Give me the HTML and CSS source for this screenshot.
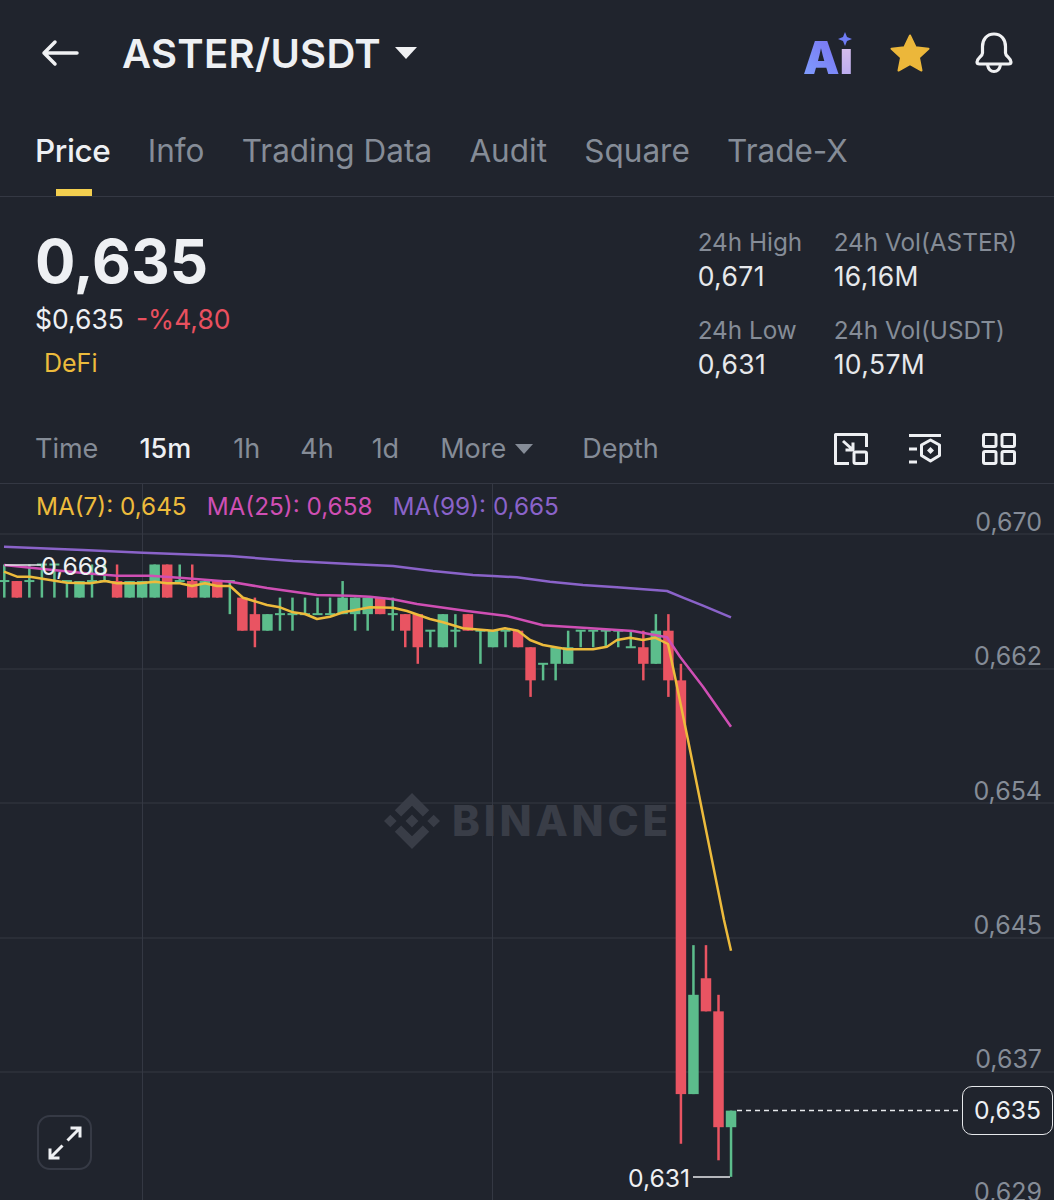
FILE: index.html
```html
<!DOCTYPE html>
<html lang="en">
<head>
  <meta charset="UTF-8">
  <meta name="viewport" content="width=device-width, initial-scale=1.0">
  <title>ASTER/USDT</title>
  <link rel="stylesheet" href="styles.css">
</head>
<body>
  <header class="topbar">
    <svg class="back" viewBox="0 0 38 28" width="38" height="28"><path d="M36 14H3M14 3 3 14l11 11"/></svg>
    <div class="pair">ASTER/USDT</div>
    <span class="pair-caret"></span>
    <div class="top-icons">
      <div class="ai-icon">
        <span class="ai-a">A</span><span class="ai-i">i</span>
        <svg class="ai-spark" viewBox="0 0 14 14" width="14" height="14"><path d="M7 0 9 5 14 7 9 9 7 14 5 9 0 7 5 5z"/></svg>
      </div>
      <svg class="star" viewBox="0 0 40 38" width="40" height="38"><path d="M20 1.500 25.600 13.200 38.500 14.800 29 23.600 31.500 36.500 20 30.200 8.500 36.500 11 23.600 1.500 14.800 14.400 13.200z"/></svg>
      <svg class="bell" viewBox="0 0 40 42" width="40" height="42"><path d="M20 2C12.500 2 8.500 8 8.500 14.500V21C8.500 24.500 3 26 3 30C3 31.500 4 32 5.500 32H34.500C36 32 37 31.500 37 30C37 26 31.500 24.500 31.500 21V14.500C31.500 8 27.500 2 20 2Z"/><path d="M13.500 33C14.500 37.500 17 39.500 20 39.500S25.500 37.500 26.500 33"/></svg>
    </div>
  </header>

  <nav class="tabs">
    <a class="tab tab-active">Price</a>
    <a class="tab">Info</a>
    <a class="tab">Trading Data</a>
    <a class="tab">Audit</a>
    <a class="tab">Square</a>
    <a class="tab">Trade-X</a>
  </nav>

  <section class="summary">
    <div class="summary-left">
      <div class="last-price">0,635</div>
      <div class="sub-price"><span>$0,635</span><span class="down">-%4,80</span></div>
      <div class="tag">DeFi</div>
    </div>
    <div class="stats">
      <div class="stat"><div class="stat-label">24h High</div><div class="stat-value">0,671</div></div>
      <div class="stat"><div class="stat-label">24h Vol(ASTER)</div><div class="stat-value">16,16M</div></div>
      <div class="stat"><div class="stat-label">24h Low</div><div class="stat-value">0,631</div></div>
      <div class="stat"><div class="stat-label">24h Vol(USDT)</div><div class="stat-value">10,57M</div></div>
    </div>
  </section>

  <div class="intervals">
    <span class="iv iv-time">Time</span>
    <span class="iv iv-15m">15m</span>
    <span class="iv iv-1h">1h</span>
    <span class="iv iv-4h">4h</span>
    <span class="iv iv-1d">1d</span>
    <span class="iv iv-more">More</span>
    <span class="more-caret"></span>
    <span class="iv iv-depth">Depth</span>
    <div class="tool-icons">
      <svg viewBox="0 0 34 32" width="34" height="32"><path d="M18 1.500H1.500V30.500H15M32.500 14V1.500H18"/><path d="M9 8 19 17M19 9.500V17H11.500"/><rect x="20" y="19" width="12.500" height="11.500" rx="1.500"/></svg>
      <svg viewBox="0 0 34 32" width="34" height="32"><path d="M1 2.500H33M1 16H9M1 29H9"/><path d="M22.500 7 31.500 12V22.500L22.500 28 13.500 22.500V12Z"/><path class="fill" d="M22.500 14 26 17.500 22.500 21 19 17.500Z"/></svg>
      <svg viewBox="0 0 34 32" width="34" height="32"><rect x="1.500" y="1.500" width="12.500" height="12" rx="1.500"/><rect x="20" y="1.500" width="12.500" height="12" rx="1.500"/><rect x="1.500" y="18.500" width="12.500" height="12" rx="1.500"/><rect x="20" y="18.500" width="12.500" height="12" rx="1.500"/></svg>
    </div>
  </div>

  <section class="chart">
    <svg class="plot" id="plot" viewBox="0 484 1054 716" width="1054" height="716">
      <g class="grid">
        <path d="M0 534H1054M0 669H1054M0 803H1054M0 938H1054M0 1072H1054M142.500 484V1200M492.500 484V1200"/>
      </g>
      <g id="candles"></g>
      <polyline class="ma ma99" id="ma99"/>
      <polyline class="ma ma25" id="ma25"/>
      <polyline class="ma ma7" id="ma7"/>
      <path class="mark" d="M5 565H41M693 1177H730"/>
      <path class="last-line" d="M737 1110.500H962"/>
    </svg>

    <div class="legend">
      <span class="c-ma7">MA(7): 0,645</span>
      <span class="c-ma25">MA(25): 0,658</span>
      <span class="c-ma99">MA(99): 0,665</span>
    </div>

    <div class="watermark">
      <svg viewBox="0 0 126.610 126.610" width="56" height="56"><path d="M38.730 53.200l24.590-24.580 24.600 24.600 14.300-14.310L63.320 0l-38.900 38.900zM0 63.310l14.300-14.310 14.310 14.310-14.310 14.300zM38.730 73.410l24.590 24.590 24.600-24.600 14.310 14.290-38.900 38.910-38.910-38.880zM98 63.310l14.300-14.310 14.310 14.300-14.310 14.320zM77.830 63.300L63.320 48.780 52.590 59.510l-1.240 1.230-2.540 2.540 14.510 14.500 14.510-14.470z"/></svg>
      <span>BINANCE</span>
    </div>

    <span class="axis axis-670">0,670</span>
    <span class="axis axis-662">0,662</span>
    <span class="axis axis-654">0,654</span>
    <span class="axis axis-645">0,645</span>
    <span class="axis axis-637">0,637</span>
    <span class="axis axis-629">0,629</span>
    <span class="last-box">0,635</span>

    <span class="note note-high">0,668</span>
    <span class="note note-low">0,631</span>

    <div class="expand">
      <svg viewBox="0 0 34 34" width="34" height="34"><path d="M19.500 14.500 32 2M22.500 2H32V11.500M14.500 19.500 2 32M2 22.500V32H11.500"/></svg>
    </div>
  </section>

  <script src="chart.js"></script>
</body>
</html>
```

FILE: styles.css
```css
html, body {
  height: 1200px;
}

body {
  margin: 0;
  background: #20242d;
  color: #eef0f3;
  font-family: 'Inter', 'Liberation Sans', sans-serif;
  overflow: hidden;
}

.topbar {
  display: flex;
  align-items: center;
  height: 106px;
  padding: 0 40px 0 41px;
  box-sizing: border-box;
}

.back {
  fill: none;
  stroke: #f0f1f3;
  stroke-width: 3.500;
  stroke-linecap: round;
  stroke-linejoin: round;
  margin-right: 43px;
}

.pair {
  font-size: 40px;
  font-weight: 600;
  letter-spacing: 0.3px;
}

.pair-caret {
  width: 0;
  height: 0;
  margin-left: 14px;
  border-left: 11px solid transparent;
  border-right: 11px solid transparent;
  border-top: 12px solid #f0f1f3;
}

.top-icons {
  display: flex;
  align-items: center;
  margin-left: auto;
}

.ai-icon {
  position: relative;
  width: 51px;
  height: 42px;
  font-size: 46px;
  font-weight: 900;
  line-height: 50px;
}

.ai-a {
  background: linear-gradient(45deg, #7fa3ff, #7a6cf0);
  -webkit-background-clip: text;
  background-clip: text;
  color: transparent;
}

.ai-i {
  background: linear-gradient(#e6c9e8, #b3a6f2);
  -webkit-background-clip: text;
  background-clip: text;
  color: transparent;
}

/* sits on top of the dot of the i, as in the app's logo */
.ai-spark {
  position: absolute;
  right: 1px;
  top: 0;
  padding: 0 1px 3px;
  background: #20242d;
  fill: #6f7cf5;
}

.star {
  margin: 0 44px 0 36px;
  fill: #ecb73a;
  stroke: #ecb73a;
  stroke-width: 2;
  stroke-linejoin: round;
}

.bell {
  fill: none;
  stroke: #f0f1f3;
  stroke-width: 3.200;
  stroke-linejoin: round;
}

.tabs {
  display: flex;
  gap: 37.300px;
  height: 90px;
  padding: 0 35px;
  border-bottom: 1px solid #343843;
  font-size: 31.500px;
}

.tab {
  position: relative;
  height: 90px;
  line-height: 90px;
  color: #858c97;
  white-space: nowrap;
}

.tab-active {
  color: #eef0f3;
  font-weight: 500;
  letter-spacing: -0.4px;
}

.tab-active::after {
  content: "";
  position: absolute;
  left: 21px;
  bottom: 0;
  width: 36px;
  height: 7px;
  background: #f3cf4f;
}

.summary {
  display: flex;
  justify-content: space-between;
  height: 197px;
  padding: 0 37px 0 35px;
}

.last-price {
  margin-top: 29px;
  height: 70px;
  font-size: 60px;
  font-weight: 700;
  line-height: 70px;
}

.sub-price {
  display: flex;
  gap: 12px;
  margin-top: 5px;
  font-size: 26.500px;
  line-height: 36px;
  color: #eef0f3;
}

.down {
  color: #e9505f;
}

.tag {
  margin: 8px 0 0 9px;
  font-size: 25px;
  line-height: 36px;
  color: #edbb3c;
}

.stats {
  display: grid;
  grid-template-columns: 136px auto;
  grid-auto-rows: 88px;
  margin-top: 28px;
}

.stat-label {
  font-size: 24.300px;
  line-height: 34px;
  color: #858c97;
  white-space: nowrap;
}

.stat-value {
  font-size: 26.500px;
  line-height: 34px;
  letter-spacing: 0.400px;
  color: #e6e8eb;
}

.intervals {
  display: flex;
  align-items: center;
  height: 90px;
  padding: 20px 38px 0 35px;
  border-bottom: 1px solid #343843;
  box-sizing: border-box;
  font-size: 27px;
  color: #858c97;
}

.iv {
  white-space: nowrap;
}

.iv-15m {
  margin-left: 41px;
  color: #eef0f3;
  font-weight: 500;
}

.iv-1h {
  margin-left: 42px;
}

.iv-4h {
  margin-left: 40px;
}

.iv-1d {
  margin-left: 38px;
}

.iv-more {
  margin-left: 41px;
}

.more-caret {
  width: 0;
  height: 0;
  margin-left: 9px;
  border-left: 9px solid transparent;
  border-right: 9px solid transparent;
  border-top: 10px solid #858c97;
}

.iv-depth {
  margin-left: 49px;
}

.tool-icons {
  display: flex;
  gap: 40px;
  margin-left: auto;
}

.tool-icons svg {
  fill: none;
  stroke: #eef0f3;
  stroke-width: 3;
  stroke-linejoin: round;
}

.tool-icons .fill {
  fill: #eef0f3;
  stroke: none;
}

.chart {
  position: relative;
  height: 716px;
  overflow: hidden;
}

.plot {
  position: absolute;
  top: 0;
  left: 0;
}

.grid path {
  fill: none;
  stroke: #343843;
  stroke-width: 1;
}

.ma {
  fill: none;
  stroke-width: 2.500;
  stroke-linejoin: round;
}

.ma7 {
  stroke: #edbb3c;
}

.ma25 {
  stroke: #cf4fb4;
}

.ma99 {
  stroke: #8a63c9;
}

.up {
  fill: #5cbd8c;
}

.dn {
  fill: #e95462;
}

.mark {
  fill: none;
  stroke: #e6e8eb;
  stroke-width: 1.500;
}

.last-line {
  fill: none;
  stroke: #e6e8eb;
  stroke-width: 1.500;
  stroke-dasharray: 5 4;
}

.legend {
  display: flex;
  gap: 20px;
  position: absolute;
  top: 5px;
  left: 36px;
  font-size: 24.300px;
  line-height: 34px;
}

.c-ma7 {
  color: #edbb3c;
}

.c-ma25 {
  color: #cf4fb4;
}

.c-ma99 {
  color: #8a63c9;
}

.watermark {
  position: absolute;
  top: 309px;
  left: 384px;
  display: flex;
  align-items: center;
  gap: 12px;
  color: #393d47;
}

.watermark svg {
  fill: #393d47;
}

.watermark span {
  font-size: 42px;
  font-weight: 800;
  line-height: 56px;
  letter-spacing: 3.800px;
}

.axis {
  position: absolute;
  right: 12px;
  font-size: 25px;
  line-height: 30px;
  color: #858c97;
}

.axis-670 { top: 23px; }
.axis-662 { top: 157px; }
.axis-654 { top: 292px; }
.axis-645 { top: 426px; }
.axis-637 { top: 560px; }
.axis-629 { top: 693px; }

.last-box {
  position: absolute;
  top: 602px;
  left: 962px;
  width: 91px;
  height: 49px;
  border: 1.500px solid #e6e8eb;
  border-radius: 10px;
  background: #20242d;
  box-sizing: border-box;
  text-align: center;
  font-size: 24.700px;
  line-height: 47px;
  color: #eef0f3;
}

.note {
  position: absolute;
  font-size: 24.700px;
  line-height: 30px;
  color: #eef0f3;
}

.note-high {
  top: 67px;
  left: 41px;
}

.note-low {
  top: 679px;
  left: 628px;
}

.expand {
  position: absolute;
  top: 631px;
  left: 37px;
  display: flex;
  align-items: center;
  justify-content: center;
  width: 55px;
  height: 55px;
  border: 2px solid #363a45;
  border-radius: 13px;
  box-sizing: border-box;
}

.expand svg {
  fill: none;
  stroke: #eef0f3;
  stroke-width: 3;
}
```

FILE: chart.js
```js
// each candle: colour, body top, body bottom, wick top, wick bottom (in price ticks)
const candles = [
  ['up',1,1,0,2],['dn',1,2,1,2],['up',1,1,0,2],['up',0,0,0,2],['up',0,0,0,2],['up',1,1,1,2],
  ['up',1,2,1,2],['up',1,1,0,2],['up',1,1,0,1],['dn',1,2,0,2],['up',1,2,1,2],['up',1,2,1,2],
  ['up',0,2,0,2],['dn',0,2,0,2],['up',1,1,0,1],['dn',1,2,0,2],['up',1,2,1,2],['dn',1,2,1,2],
  ['up',1,1,1,3],['dn',2,4,2,4],['dn',3,4,2,5],['up',3,4,3,4],['up',3,3,2,4],['up',3,3,2,4],
  ['up',3,3,2,3],['up',3,3,2,3],['up',3,3,2,3],['up',2,3,1,3],['up',2,3,2,4],['up',2,3,2,4],
  ['dn',2,3,2,3],['up',3,3,2,4],['dn',3,4,3,5],['dn',3,5,3,6],['up',4,4,4,5],['up',3,5,3,5],
  ['up',4,4,3,5],['dn',3,4,3,4],['up',4,4,4,6],['up',4,5,4,5],['up',4,4,4,5],['dn',4,5,4,5],
  ['dn',5,7,5,8],['up',6,6,6,7],['up',5,6,5,7],['up',5,6,4,6],['up',4,4,4,5],['up',4,4,4,5],
  ['up',4,4,4,5],['up',4,4,4,5],['up',5,5,4,5],['dn',5,6,4,7],['up',4,6,3,6],['dn',4,7,3,8],
  ['dn',7,32,6,35],['up',26,32,23,32],['dn',25,27,23,27],['dn',27,34,26,36],['up',33,34,33,37]
];

const ma99 = '4,546.700 83,550 143,552.700 230,556 293,561 350,564 393,566 433,571 473,575 493,576 517,577.300 550,581.700 583,585 617,587.300 667,591 683,597.700 703,605.700 731,617.300';
const ma25 = '4,565 43,569 83,573 117,575.700 150,575.700 183,578 230,581.700 267,588 317,595 350,595.700 370,596.700 393,599.300 417,604 467,611 507,616 543,625.300 583,627.700 633,631 667,637.300 680,656.700 703,686.700 731,726.700';
const ma7 = '4,571.700 17,576.700 30,576.700 67,582.700 90,583.300 105,581 117,583.300 140,583.300 155,581.700 167,583.300 180,583.300 192,586 205,583.300 217,586 230,586 243,597.700 267,605 280,607.300 293,612.300 305,614 317,619 330,616.700 343,612.300 350,611 370,607.300 393,607.700 407,611 430,619 443,622.300 463,628.300 493,630.700 505,628.300 518,630.700 530,640 543,645 567,649.300 593,649.300 607,646.700 617,640 630,637.700 643,640 655,637.700 668,644 675,676.700 688,740 724,920 731,950.700';

document.getElementById('ma99').setAttribute('points', ma99);
document.getElementById('ma25').setAttribute('points', ma25);
document.getElementById('ma7').setAttribute('points', ma7);

function tickY(k) {
  return 564.5 + 16.55 * k;
}

function addRect(parent, cls, x, y, w, h) {
  const r = document.createElementNS('http://www.w3.org/2000/svg', 'rect');
  r.setAttribute('class', cls);
  r.setAttribute('x', x);
  r.setAttribute('y', y);
  r.setAttribute('width', w);
  r.setAttribute('height', h);
  parent.appendChild(r);
}

const group = document.getElementById('candles');
candles.forEach(function (c, i) {
  const x = 4.3 + 12.53 * i;
  addRect(group, c[0], x - 1.25, tickY(c[3]), 2.5, tickY(c[4]) - tickY(c[3]));
  if (c[1] === c[2]) {
    addRect(group, c[0], x - 5, tickY(c[1]) - 1, 10, 2);
  } else {
    addRect(group, c[0], x - 5.25, tickY(c[1]), 10.5, tickY(c[2]) - tickY(c[1]));
  }
});
```
